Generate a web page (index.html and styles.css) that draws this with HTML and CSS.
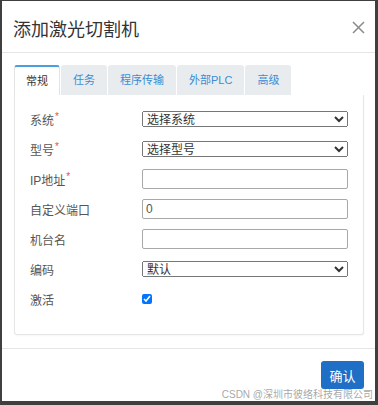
FILE: index.html
```html
<!DOCTYPE html>
<html lang="zh-CN">
<head>
    <meta charset="UTF-8">
    <meta name="viewport" content="width=device-width, initial-scale=1.0">
    <title>添加激光切割机</title>
    <link rel="stylesheet" href="styles.css">
</head>
<body>

    <div class="modal">
        <div class="modal-header">
            <h1 class="modal-title">添加激光切割机</h1>
            <button class="close-btn" aria-label="关闭">
                <svg width="13" height="13" viewBox="0 0 13 13">
                    <path d="M1 1 L12 12 M12 1 L1 12" stroke="#8a8a8a" stroke-width="1.5" fill="none"/>
                </svg>
            </button>
        </div>

        <div class="modal-body">
            <ul class="tabs">
                <li class="tab active">常规</li>
                <li class="tab">任务</li>
                <li class="tab">程序传输</li>
                <li class="tab">外部PLC</li>
                <li class="tab">高级</li>
            </ul>

            <div class="tab-panel">
                <div class="form-row">
                    <label>系统<span class="req">*</span></label>
                    <select class="field-select"><option>选择系统</option></select>
                </div>
                <div class="form-row">
                    <label>型号<span class="req">*</span></label>
                    <select class="field-select"><option>选择型号</option></select>
                </div>
                <div class="form-row">
                    <label>IP地址<span class="req">*</span></label>
                    <input type="text" class="field-input">
                </div>
                <div class="form-row">
                    <label>自定义端口</label>
                    <input type="text" class="field-input" value="0">
                </div>
                <div class="form-row">
                    <label>机台名</label>
                    <input type="text" class="field-input">
                </div>
                <div class="form-row">
                    <label>编码</label>
                    <select class="field-select"><option>默认</option></select>
                </div>
                <div class="form-row">
                    <label>激活</label>
                    <input type="checkbox" class="field-check" checked>
                </div>
            </div>
        </div>

        <div class="modal-footer">
            <button class="btn-primary">确认</button>
        </div>

        <span class="watermark">CSDN @深圳市彼络科技有限公司</span>
    </div>

</body>
</html>
```

FILE: styles.css
```css
/* General */
body {
    margin: 0;
    padding: 0;
    background-color: #3f3f3f;
    font-family: "Liberation Sans", "Noto Sans CJK SC", sans-serif;
    color: #333;
}

/* Modal */
.modal {
    position: relative;
    width: 373px;
    height: 400px;
    margin: 1px 0 0 2px;
    background: #fff;
    display: flex;
    flex-direction: column;
}

.modal-header {
    border-bottom: 1px solid #e5e5e5;
    display: flex;
    align-items: center;
    justify-content: space-between;
    padding: 2px 10px 0 11px;
    height: 49px;
}

.modal-title {
    margin: 0;
    font-size: 18px;
    font-weight: normal;
    color: #333;
}

.close-btn {
    background: none;
    border: none;
    padding: 0;
    width: 13px;
    height: 13px;
    display: flex;
    cursor: pointer;
}

.modal-body {
    padding: 12px 11px 13px 12px;
}

/* Tabs */
.tabs {
    list-style: none;
    margin: 0;
    padding: 0;
    display: flex;
    height: 30px;
}

.tab {
    height: 30px;
    line-height: 30px;
    padding: 0 12px;
    margin-right: 1px;
    font-size: 11px;
    color: #3a8dd3;
    background: #e9ecef;
    border-radius: 3px 3px 0 0;
    box-sizing: border-box;
}

.tab.active {
    background: #fff;
    color: #333;
    border-top: 2px solid #4aa0de;
    border-left: 1px solid #e3e3e3;
    border-right: 1px solid #e3e3e3;
    line-height: 28px;
    padding: 0 11px;
}

.tab-panel {
    border: 1px solid #e6e6e6;
    border-top: none;
    border-radius: 0 0 3px 3px;
    padding: 9px 15px 20px 15px;
    box-shadow: 0 1px 2px rgba(0, 0, 0, 0.04);
}

/* Form rows */
.form-row {
    display: grid;
    grid-template-columns: 112px 1fr;
    align-items: center;
    height: 30px;
    font-size: 12px;
}

.form-row label {
    color: #555;
}

.req {
    color: #e0534f;
    font-size: 10px;
    vertical-align: top;
    margin-left: 1px;
}

.field-select {
    height: 16px;
    font-size: 12px;
    font-family: "Liberation Sans", "Noto Sans CJK SC", sans-serif;
    padding: 0;
    color: #333;
}

.field-input {
    height: 20px;
    box-sizing: border-box;
    border: 1px solid #a8a8a8;
    border-radius: 2px;
    padding: 0 3px;
    font-size: 12px;
    color: #555;
    font-family: "Liberation Sans", "Noto Sans CJK SC", sans-serif;
}

.field-check {
    width: 10px;
    height: 10px;
    margin: 0;
}

/* Footer */
.modal-footer {
    border-top: 1px solid #e5e5e5;
    padding: 12px 11px 11px 0;
    display: flex;
    justify-content: flex-end;
}

.btn-primary {
    width: 43px;
    height: 28px;
    background-color: #1f6fc6;
    color: #fff;
    border: none;
    border-radius: 3px;
    font-size: 13px;
    font-family: "Liberation Sans", "Noto Sans CJK SC", sans-serif;
    padding: 0;
}

/* CSDN watermark over the corner */
.watermark {
    position: absolute;
    right: 2px;
    bottom: 0;
    font-size: 10px;
    line-height: 12px;
    color: rgba(150, 150, 150, 0.85);
    white-space: nowrap;
}
```
